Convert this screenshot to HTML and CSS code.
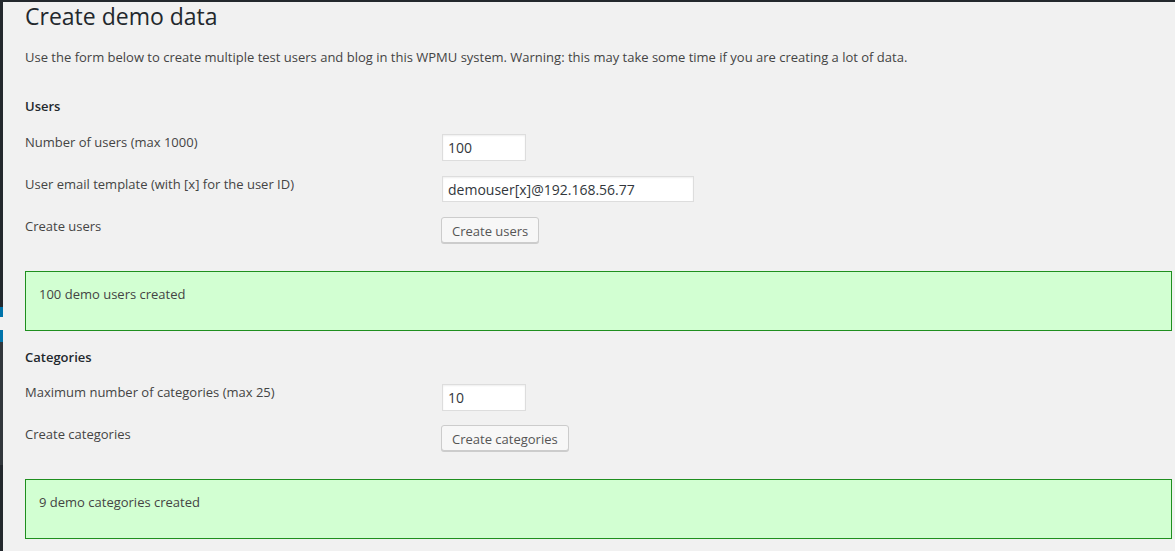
FILE: index.html
```html
<!DOCTYPE html>
<html lang="en">
<head>
<meta charset="utf-8">
<title>Create demo data</title>
<link rel="stylesheet" href="styles.css">
</head>
<body>
<div class="adminbar"></div>
<div class="layout">
  <div class="sidebar">
    <div class="sb-top"></div>
    <div class="sb-blue sb-blue-a"></div>
    <div class="sb-notch"></div>
    <div class="sb-blue sb-blue-b"></div>
    <div class="sb-sub"></div>
    <div class="sb-rest"></div>
  </div>
  <main class="content">
    <h1 class="title">Create demo data</h1>
    <p class="intro">Use the form below to create multiple test users and blog in this WPMU system. Warning: this may take some time if you are creating a lot of data.</p>

    <h3 class="section-title section-first">Users</h3>
    <div class="form-table">
      <div class="row">
        <label class="row-label">Number of users (max 1000)</label>
        <div class="row-field"><input class="text-input input-small" type="text" value="100"></div>
      </div>
      <div class="row">
        <label class="row-label">User email template (with [x] for the user ID)</label>
        <div class="row-field"><input class="text-input input-wide" type="text" value="demouser[x]@192.168.56.77"></div>
      </div>
      <div class="row">
        <label class="row-label">Create users</label>
        <div class="row-field"><button class="button" type="button">Create users</button></div>
      </div>
    </div>
    <div class="notice">100 demo users created</div>

    <h3 class="section-title">Categories</h3>
    <div class="form-table">
      <div class="row">
        <label class="row-label">Maximum number of categories (max 25)</label>
        <div class="row-field"><input class="text-input input-small" type="text" value="10"></div>
      </div>
      <div class="row">
        <label class="row-label">Create categories</label>
        <div class="row-field"><button class="button" type="button">Create categories</button></div>
      </div>
    </div>
    <div class="notice">9 demo categories created</div>
  </main>
</div>
</body>
</html>
```

FILE: styles.css
```css
* { box-sizing: border-box; }

html, body {
  margin: 0;
  padding: 0;
  height: 100%;
}

body {
  background: #f1f1f1;
  font-family: "Open Sans", "Noto Sans", sans-serif;
  font-size: 13px;
  line-height: 1.5;
  color: #444;
  overflow: hidden;
}

.adminbar {
  height: 2px;
  background: #23282d;
}

.layout {
  display: flex;
  min-height: calc(100% - 2px);
}

.sidebar {
  width: 3px;
  flex: 0 0 3px;
  display: flex;
  flex-direction: column;
}

.sb-top { height: 305px; background: #23282d; }
.sb-blue { background: #0073aa; }
.sb-blue-a { height: 10px; }
.sb-notch { height: 13px; background: #f1f1f1; }
.sb-blue-b { height: 12px; }
.sb-sub { height: 123px; background: #32373c; }
.sb-rest { flex: 1; background: #23282d; }

.content {
  flex: 1;
  padding: 0 3px 0 22px;
}

.title {
  margin: 0;
  font-size: 23px;
  font-weight: 400;
  line-height: 29px;
  color: #23282d;
}

.intro {
  margin: 17px 0 0;
}

.section-title {
  margin: 17px 0 14px;
  font-size: 13px;
  font-weight: 600;
  line-height: 1.5;
  color: #23282d;
}

.section-first {
  margin-top: 29px;
  margin-bottom: 16px;
}

.form-table {
  display: flex;
  flex-direction: column;
}

.row {
  display: grid;
  grid-template-columns: 417px 1fr;
  height: 42px;
  align-items: start;
}

.row-label {
  display: block;
  padding-top: 1px;
}

.row-field {
  display: flex;
}

.text-input {
  margin-top: 2px;
  height: 27px;
  padding: 0 5px;
  border: 1px solid #ddd;
  background: #fff;
  box-shadow: inset 0 1px 2px rgba(0, 0, 0, 0.07);
  font-family: "Open Sans", "Noto Sans", sans-serif;
  font-size: 14px;
  color: #32373c;
  outline: none;
  border-radius: 0;
}

.input-small { width: 84px; }
.input-wide { width: 252px; height: 26px; }

.button {
  margin: 1px 0 0 -1px;
  height: 26px;
  padding: 2px 10px 0;
  border: 1px solid #ccc;
  border-radius: 3px;
  background: #f7f7f7;
  box-shadow: 0 1px 0 #ccc;
  font-family: "Open Sans", "Noto Sans", sans-serif;
  font-size: 13px;
  line-height: 22px;
  color: #555;
  cursor: pointer;
}

.notice {
  margin-top: 13px;
  height: 60px;
  padding: 13px 13px 0;
  background: #d2ffd2;
  border: 1px solid #1f8f1f;
  color: #444;
}
```
